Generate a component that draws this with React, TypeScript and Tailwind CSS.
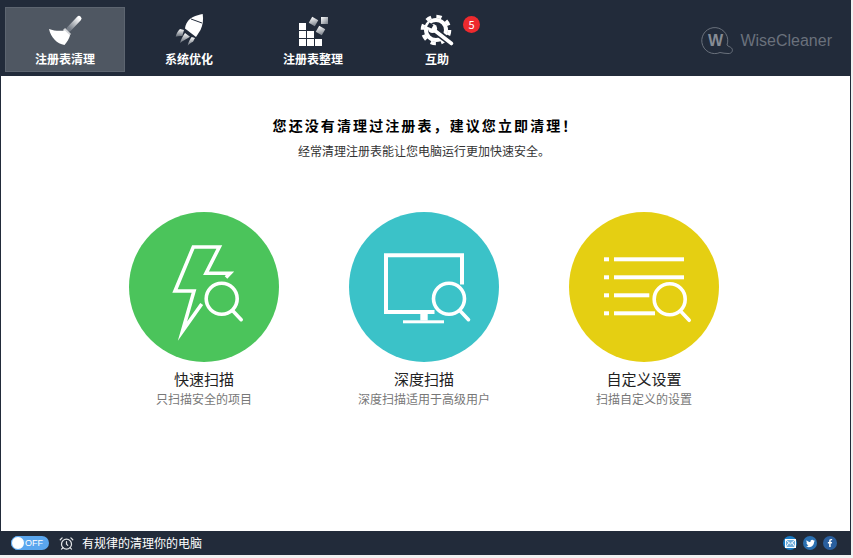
import { AlarmClock } from 'lucide-react';
import { FaFacebookF, FaTwitter } from 'react-icons/fa';

const cjk = { fontFamily: '"Noto Sans CJK SC", "Liberation Sans", sans-serif' };

function BroomIcon() {
  return (
    <svg width="48" height="36" viewBox="0 0 48 36">
      <defs>
        <linearGradient id="broomHandle" x1="28" y1="15" x2="38" y2="5" gradientUnits="userSpaceOnUse">
          <stop offset="0" stopColor="#777e88" />
          <stop offset="1" stopColor="#ffffff" />
        </linearGradient>
      </defs>
      <path d="M28 16 L38 5.5" stroke="url(#broomHandle)" strokeWidth="5" strokeLinecap="round" />
      <path d="M23 16 L29 22" stroke="#d5d7da" strokeWidth="3" />
      <path d="M8 16 C13 18 19 18 24 17.5 L29 22.5 C28 26 26 29 23.5 32 C16 30.5 10 25 8 16 Z" fill="#fff" />
    </svg>
  );
}

function RocketIcon() {
  return (
    <svg width="48" height="36" viewBox="0 0 48 36">
      <defs>
        <linearGradient id="finA" x1="0" y1="0" x2="0" y2="1">
          <stop offset="0" stopColor="#ffffff" />
          <stop offset="1" stopColor="#5d6570" />
        </linearGradient>
      </defs>
      <path d="M37.7 1 C38.5 6 38 12 35.5 17 L31 24 L20 15.5 C20.5 11 23 6.5 28 4 C31 2.5 34.5 1.5 37.7 1 Z" fill="#fff" />
      <path d="M26 6 L37 10" stroke="#222b3a" strokeWidth="1" fill="none" />
      <path d="M10.7 23.7 C11.5 20.5 13 17.5 15 16 L19 17 L17.3 23 C15 22.8 12.8 23 10.7 23.7 Z" fill="url(#finA)" />
      <path d="M15 30 C16 26.5 18 22.5 20 20 L25 23.7 C22 25.5 18 27.5 15 30 Z" fill="url(#finA)" />
      <path d="M22.7 32.7 C23.2 29.5 25 26 26.7 24 L30 25 L28 28.7 C26 29.8 24 31 22.7 32.7 Z" fill="url(#finA)" />
    </svg>
  );
}

function BlocksIcon() {
  const cells = [
    [10, 10], [10, 18], [18, 18], [10, 26], [18, 26], [26, 26],
  ];
  return (
    <svg width="48" height="36" viewBox="0 0 48 36">
      <defs>
        <linearGradient id="flyBlock" x1="0" y1="0" x2="1" y2="1">
          <stop offset="0" stopColor="#ffffff" />
          <stop offset="1" stopColor="#767d87" />
        </linearGradient>
      </defs>
      {cells.map(([x, y]) => (
        <rect key={`${x}-${y}`} x={x} y={y} width="7" height="7" fill="#fff" />
      ))}
      <rect x="21" y="5" width="7" height="7" fill="url(#flyBlock)" transform="rotate(30 24.5 8.5)" />
      <rect x="28" y="14" width="7" height="7" fill="url(#flyBlock)" transform="rotate(30 31.5 17.5)" />
      <rect x="32" y="4" width="7" height="7" fill="url(#flyBlock)" />
    </svg>
  );
}

function GearIcon() {
  return (
    <svg width="48" height="36" viewBox="0 0 48 36">
      <circle cx="23" cy="17" r="10" fill="none" stroke="#fff" strokeWidth="4" />
      <circle cx="23" cy="17" r="13.5" fill="none" stroke="#fff" strokeWidth="3.6" strokeDasharray="5.3 5.3" />
      <path d="M21 17 L39.5 31" stroke="#222b3a" strokeWidth="7" fill="none" />
      <path d="M21 17 L38.5 30.5" stroke="#fff" strokeWidth="3.6" strokeLinecap="round" />
      <circle cx="19.5" cy="15.5" r="4.6" fill="#fff" />
      <path d="M18.5 15.5 L14 13.5 L16.5 9.5 L20.5 12 Z" fill="#222b3a" />
    </svg>
  );
}

function Magnifier({ x, y }: { x: number; y: number }) {
  return (
    <g fill="none" stroke="#fff" strokeWidth="3.6" strokeLinecap="round">
      <circle cx={x} cy={y} r="15.5" />
      <path d={`M${x + 11.5} ${y + 12.5} L${x + 19.5} ${y + 21}`} />
    </g>
  );
}

function BoltIcon() {
  return (
    <svg width="150" height="150" viewBox="0 0 150 150">
      <path
        d="M97 65.5 L101 61.3 H77 L90.3 35 H64.3 L46 79 H65 L53.5 119 L72.7 92"
        fill="none"
        stroke="#fff"
        strokeWidth="3.6"
        strokeMiterlimit="20"
      />
      <Magnifier x={92.7} y={86.7} />
    </svg>
  );
}

function MonitorIcon() {
  return (
    <svg width="150" height="150" viewBox="0 0 150 150">
      <path d="M113 72.5 V43.3 H37 V100 H85.5" fill="none" stroke="#fff" strokeWidth="4" />
      <rect x="71.3" y="102" width="7.4" height="6.5" fill="#fff" />
      <rect x="54" y="108.3" width="41" height="3" fill="#fff" />
      <Magnifier x={100} y={86.7} />
    </svg>
  );
}

function ListIcon() {
  const rows = [
    { y: 45.3, end: 115 },
    { y: 63.3, end: 115 },
    { y: 81.3, end: 80.3 },
    { y: 99.3, end: 86 },
  ];
  return (
    <svg width="150" height="150" viewBox="0 0 150 150">
      {rows.map((r) => (
        <g key={r.y} fill="#fff">
          <rect x="35" y={r.y} width="5" height="4" />
          <rect x="45" y={r.y} width={r.end - 45} height="4" />
        </g>
      ))}
      <Magnifier x={100.7} y={87.3} />
    </svg>
  );
}

function MailIcon() {
  return (
    <svg width="11" height="9" viewBox="0 0 11 9" fill="none" stroke="#fff" strokeWidth="1">
      <rect x="0.5" y="0.5" width="10" height="8" fill="#ffffff66" />
      <path d="M0.5 0.5 L5.5 5 L10.5 0.5 M0.5 8.5 L4 3.5 M10.5 8.5 L7 3.5" />
    </svg>
  );
}

const tabs = [
  { label: '注册表清理', icon: <BroomIcon />, active: true },
  { label: '系统优化', icon: <RocketIcon /> },
  { label: '注册表整理', icon: <BlocksIcon /> },
  { label: '互助', icon: <GearIcon />, badge: 5 },
];

const scans = [
  { title: '快速扫描', desc: '只扫描安全的项目', color: 'bg-[#4bc45b]', icon: <BoltIcon /> },
  { title: '深度扫描', desc: '深度扫描适用于高级用户', color: 'bg-[#3bc2c8]', icon: <MonitorIcon /> },
  { title: '自定义设置', desc: '扫描自定义的设置', color: 'bg-[#e5cf12]', icon: <ListIcon /> },
];

export default function App() {
  return (
    <div className="h-[558px] w-[853px] overflow-hidden bg-[#f1f1f1]" style={cjk}>
      <div className="flex h-[555px] w-[851px] flex-col border-x border-[#222b3a] bg-white">
        {/* Top bar */}
        <header className="flex h-[76px] shrink-0 items-start justify-between bg-[#222b3a] pt-[7px] pr-[18px] pl-1">
          <nav className="flex gap-1">
            {tabs.map((tab) => (
              <div
                key={tab.label}
                className={`relative flex h-[65px] w-[120px] flex-col items-center border pt-[5px] ${
                  tab.active ? 'border-[#5d6570] bg-[#4f5762]' : 'border-transparent'
                }`}
              >
                {tab.icon}
                <span className="mt-[1px] text-[12px] leading-[18px] font-bold text-white">{tab.label}</span>
                {tab.badge && (
                  <span className="absolute top-[8px] left-[85px] flex h-[17px] w-[17px] items-center justify-center rounded-full bg-[#ee2a2e] text-[11px] leading-none text-white">
                    {tab.badge}
                  </span>
                )}
              </div>
            ))}
          </nav>
          <div className="mt-[18px] flex items-center gap-[5px]">
            <svg width="35" height="32" viewBox="0 0 35 32" fill="none">
              <path
                d="M27 20 A13 13 0 1 0 20 27.5 C23 28 25 28.5 28 28.5 C32 29 33.5 25 31.5 23 C30 21.5 28 21.5 27 20 Z"
                stroke="#6a717c"
                strokeWidth="1"
              />
              <text x="15.5" y="20.5" textAnchor="middle" fontSize="16" fontWeight="700" fill="#868c95" fontFamily="Liberation Sans">
                W
              </text>
            </svg>
            <span className="text-[16px] leading-none text-[#6a717c]" style={{ fontFamily: '"Liberation Sans", sans-serif' }}>
              WiseCleaner
            </span>
          </div>
        </header>

        {/* Main content */}
        <main className="flex flex-1 flex-col items-center">
          <h1 className="mt-[38px] text-[14px] leading-[22px] font-bold tracking-[2.1px] text-black">
            您还没有清理过注册表，建议您立即清理！
          </h1>
          <p className="mt-[6px] pr-[3px] text-[12px] leading-[18px] text-[#333]">经常清理注册表能让您电脑运行更加快速安全。</p>
          <div className="mt-[52px] flex pr-[3px]">
            {scans.map((scan) => (
              <div key={scan.title} className="flex w-[220px] flex-col items-center">
                <div className={`h-[150px] w-[150px] rounded-full ${scan.color}`}>{scan.icon}</div>
                <div className="mt-[6px] text-[15px] leading-[22px] text-[#222]">{scan.title}</div>
                <div className="text-[12px] leading-[18px] text-[#777]">{scan.desc}</div>
              </div>
            ))}
          </div>
        </main>

        {/* Status bar */}
        <footer className="flex h-[24px] shrink-0 items-center bg-[#222b3a] pr-[13px] pl-[10px]">
          <div className="flex h-[14px] w-[38px] items-center justify-between rounded-full bg-[#5aa6ee] pr-[6px]">
            <span className="h-[14px] w-[14px] rounded-full border border-[#5aa6ee] bg-white" />
            <span className="text-[9px] leading-none text-white" style={{ fontFamily: '"Liberation Sans", sans-serif' }}>
              OFF
            </span>
          </div>
          <AlarmClock className="ml-[10px] h-[15px] w-[15px] text-[#e2e4e6]" strokeWidth={2} />
          <span className="ml-[8px] text-[12px] leading-none text-white">有规律的清理你的电脑</span>
          <div className="ml-auto flex gap-[6px]">
            <span className="flex h-[14px] w-[14px] items-center justify-center rounded-full bg-[#1a7bc4]">
              <MailIcon />
            </span>
            <span className="flex h-[14px] w-[14px] items-center justify-center rounded-full bg-[#2a6fb0] text-white">
              <FaTwitter size={9} />
            </span>
            <span className="flex h-[14px] w-[14px] items-center justify-center rounded-full bg-[#2a5f9e] text-white">
              <FaFacebookF size={8} />
            </span>
          </div>
        </footer>
      </div>
    </div>
  );
}
